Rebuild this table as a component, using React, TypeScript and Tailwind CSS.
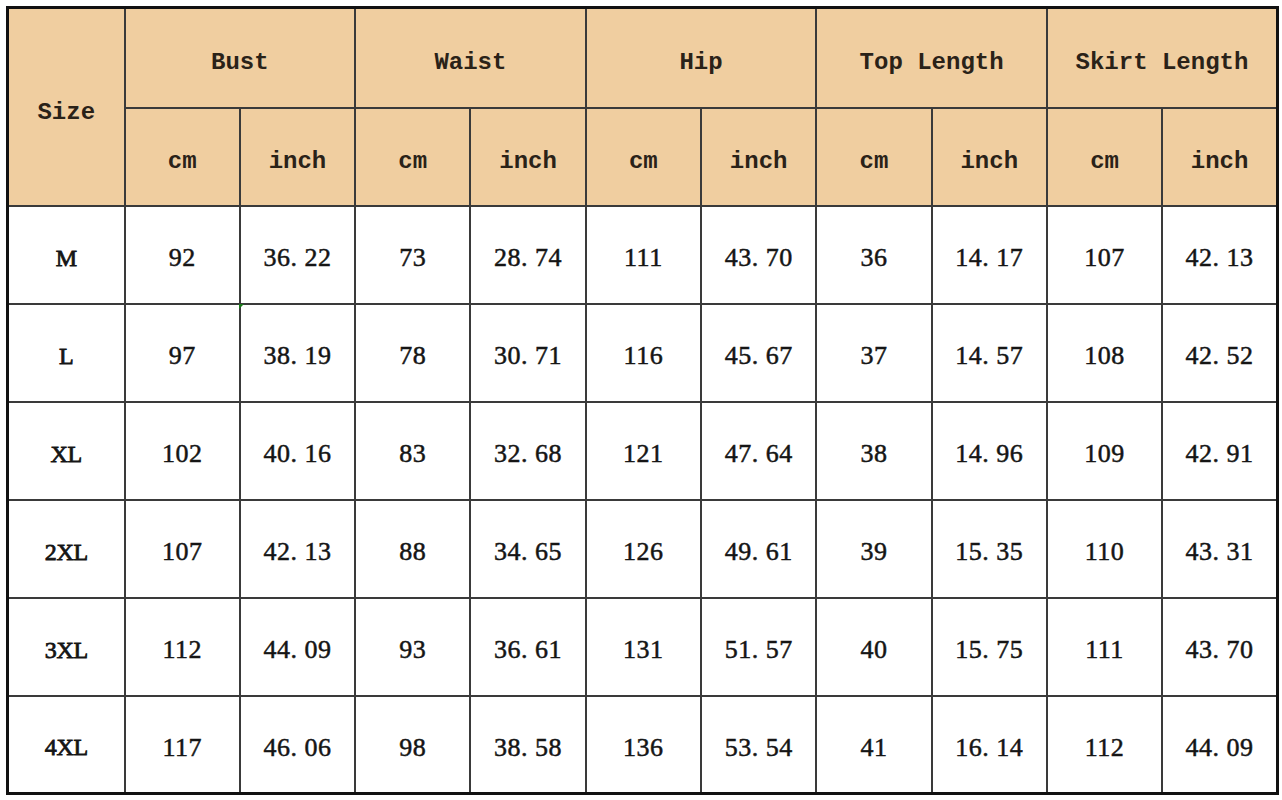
import React from "react";

const rows: [string, string[]][] = [
  ["M", ["92", "36. 22", "73", "28. 74", "111", "43. 70", "36", "14. 17", "107", "42. 13"]],
  ["L", ["97", "38. 19", "78", "30. 71", "116", "45. 67", "37", "14. 57", "108", "42. 52"]],
  ["XL", ["102", "40. 16", "83", "32. 68", "121", "47. 64", "38", "14. 96", "109", "42. 91"]],
  ["2XL", ["107", "42. 13", "88", "34. 65", "126", "49. 61", "39", "15. 35", "110", "43. 31"]],
  ["3XL", ["112", "44. 09", "93", "36. 61", "131", "51. 57", "40", "15. 75", "111", "43. 70"]],
  ["4XL", ["117", "46. 06", "98", "38. 58", "136", "53. 54", "41", "16. 14", "112", "44. 09"]],
];

const groups = ["Bust", "Waist", "Hip", "Top Length", "Skirt Length"];

const head =
  "border-2 border-[#3a3a3a] bg-[#F0CEA0] text-[#2a2218] font-bold text-[24px] text-center align-middle font-['Liberation_Mono',monospace] p-0";
const base =
  "border-2 border-[#3a3a3a] bg-white text-[#151515] text-center align-middle font-['Liberation_Serif',serif] p-0 pt-[6px]";

export default function App() {
  return (
    <div className="w-[1282px] h-[800px] bg-white pl-[6px] pt-[6px]">
      <div className="relative w-[1270px]">
        <table className="table-fixed border-collapse w-[1270px] border-[3px] border-[#111]">
          <colgroup>
            <col className="w-[117px]" />
            {Array.from({ length: 10 }).map((_, i) => (
              <col key={i} className="w-[115.3px]" />
            ))}
          </colgroup>
          <thead>
            <tr className="h-[100px]">
              <th rowSpan={2} className={head + " pt-[12px]"}>
                Size
              </th>
              {groups.map((g) => (
                <th key={g} colSpan={2} className={head + " pt-[10px]"}>
                  {g}
                </th>
              ))}
            </tr>
            <tr className="h-[98px]">
              {groups.map((g) => (
                <React.Fragment key={g}>
                  <th className={head + " pt-[10px]"}>cm</th>
                  <th className={head + " pt-[10px]"}>inch</th>
                </React.Fragment>
              ))}
            </tr>
          </thead>
          <tbody>
            {rows.map(([size, vals]) => (
              <tr key={size} className="h-[98px]">
                <td className={base + " text-[24px] tracking-[-0.3px] [-webkit-text-stroke:0.8px_#151515]"}>{size}</td>
                {vals.map((v, i) => (
                  <td
                    key={i}
                    className={base + " text-[26px] whitespace-pre tracking-[0.5px] [-webkit-text-stroke:0.5px_#151515]"}
                  >
                    {v}
                  </td>
                ))}
              </tr>
            ))}
          </tbody>
        </table>
        <div className="absolute left-[233px] top-[298px] w-0 h-0 border-t-[5px] border-r-[5px] border-t-[#1a7a1a] border-r-transparent" />
      </div>
    </div>
  );
}
